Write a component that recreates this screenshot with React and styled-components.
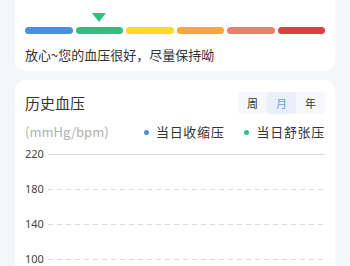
import React from 'react';
import styled, { createGlobalStyle } from 'styled-components';

const GlobalStyle = createGlobalStyle`
  body {
    margin: 0;
    background-color: #f4f6fa;
    font-family: "Noto Sans CJK SC", "Noto Sans", sans-serif;
    color: #333;
    overflow: hidden;
  }
`;

const Page = styled.div`
  width: 350px;
  height: 266px;
  padding: 0 15px;
  box-sizing: border-box;
  overflow: hidden;
`;

const Card = styled.div`
  background-color: #fff;
  border-radius: 10px;
  padding: ${props => props.padding};
  margin-top: ${props => props.top || '0'};
`;

const LevelScale = styled.div`
  display: grid;
  grid-template-columns: repeat(6, 1fr);
  column-gap: 3px;
  row-gap: 5px;
`;

const Pointer = styled.div`
  grid-row: 1;
  grid-column: ${props => props.index + 1};
  justify-self: center;
  width: 0;
  height: 0;
  border-left: 7px solid transparent;
  border-right: 7px solid transparent;
  border-top: 9px solid #2cc17f;
`;

const Segment = styled.div`
  grid-row: 2;
  height: 7px;
  border-radius: 4px;
  background-color: ${props => props.color};
`;

const Advice = styled.p`
  margin: 12px 0 0;
  font-size: 13px;
  line-height: 18px;
  color: #333;
`;

const Header = styled.div`
  display: flex;
  align-items: center;
  justify-content: space-between;
`;

const Title = styled.h2`
  margin: 0;
  font-size: 15px;
  font-weight: 400;
  line-height: 22px;
  color: #333;
`;

const Tabs = styled.div`
  display: flex;
  background-color: #f7f8fb;
  border-radius: 3px;
`;

const Tab = styled.div`
  width: 29px;
  height: 22px;
  display: flex;
  align-items: center;
  justify-content: center;
  font-size: 11px;
  border-radius: 3px;
  color: ${props => (props.active ? '#6c9be6' : '#333')};
  background-color: ${props => (props.active ? '#e9f0fb' : 'transparent')};
`;

const LegendRow = styled.div`
  display: flex;
  align-items: center;
  margin-top: 9px;
  font-size: 13px;
  line-height: 18px;
`;

const Unit = styled.span`
  color: #b0b0b0;
  margin-right: auto;
`;

const LegendItem = styled.span`
  display: flex;
  align-items: center;
  margin-left: ${props => props.gap};
  color: #333;
  letter-spacing: 0.7px;

  &::before {
    content: '';
    width: 5px;
    height: 5px;
    border-radius: 50%;
    margin-right: 7px;
    background-color: ${props => props.dot};
  }
`;

const Chart = styled.div`
  margin-top: 6px;
  display: flex;
  flex-direction: column;
`;

const GridRow = styled.div`
  display: flex;
  align-items: flex-start;
  height: 35px;
  flex-shrink: 0;
`;

const AxisLabel = styled.span`
  width: 23px;
  font-size: 11px;
  line-height: 14px;
  color: #444;
  font-family: "Noto Sans", sans-serif;
`;

const GridLine = styled.div`
  flex: 1;
  height: 1px;
  margin-top: 7px;
  background: ${props =>
    props.solid
      ? '#dcdcdc'
      : 'repeating-linear-gradient(to right, #dcdcdc 0 5px, transparent 5px 9px)'};
`;

const levels = ['#4a8fe2', '#2cc17f', '#fadb1f', '#f7a736', '#f47c6c', '#df3e42'];
const ticks = [220, 180, 140, 100];

export default function App() {
  return (
    <Page>
      <GlobalStyle />
      <Card padding="33px 10px 7px" top="-20px">
        <LevelScale>
          <Pointer index={1} />
          {levels.map(c => (
            <Segment key={c} color={c} />
          ))}
        </LevelScale>
        <Advice>放心~您的血压很好，尽量保持呦</Advice>
      </Card>
      <Card padding="12px 10px 0" top="9px">
        <Header>
          <Title>历史血压</Title>
          <Tabs>
            <Tab>周</Tab>
            <Tab active>月</Tab>
            <Tab>年</Tab>
          </Tabs>
        </Header>
        <LegendRow>
          <Unit>(mmHg/bpm)</Unit>
          <LegendItem dot="#4a8fe2">当日收缩压</LegendItem>
          <LegendItem dot="#2cc17f" gap="20px">当日舒张压</LegendItem>
        </LegendRow>
        <Chart>
          {ticks.map((t, i) => (
            <GridRow key={t}>
              <AxisLabel>{t}</AxisLabel>
              <GridLine solid={i === 0} />
            </GridRow>
          ))}
        </Chart>
      </Card>
    </Page>
  );
}
